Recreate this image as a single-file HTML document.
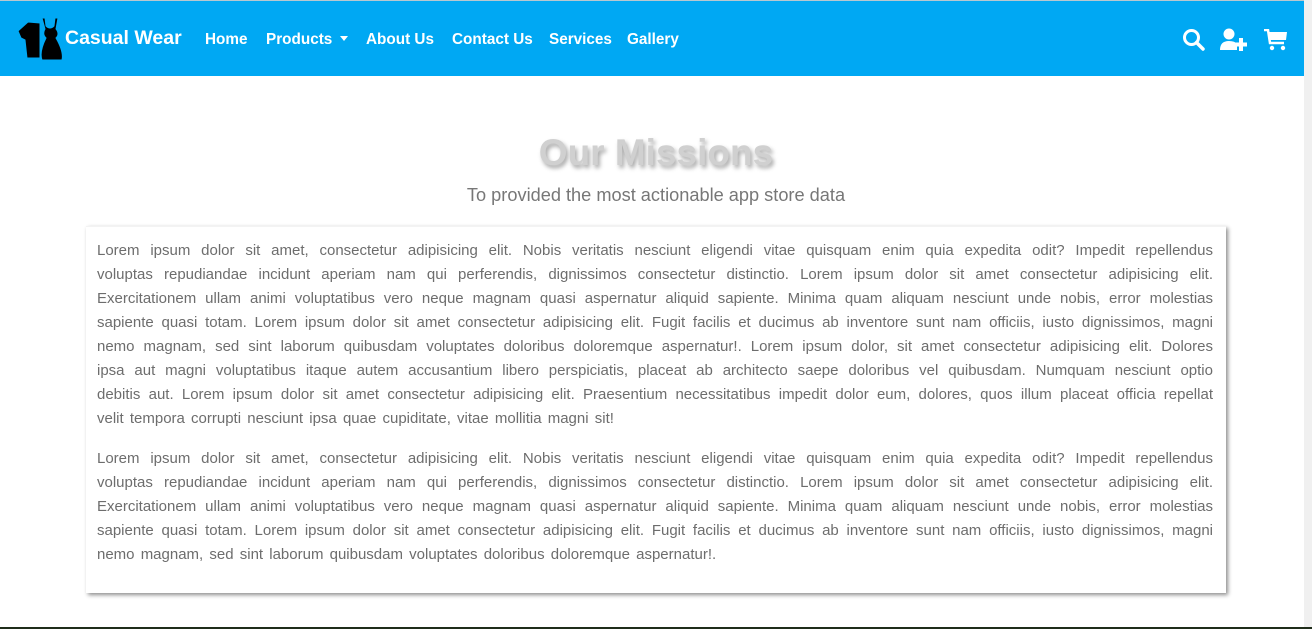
<!DOCTYPE html>
<html><head><meta charset="utf-8"><style>
*{margin:0;padding:0;box-sizing:border-box}
body{width:1312px;height:629px;overflow:hidden;background:#fff;font-family:"Liberation Sans",sans-serif;position:relative}
.nav{position:absolute;top:1px;left:0;width:1304px;height:75px;background:#00a8f3;color:#fff}
.topline{position:absolute;top:0;left:0;width:1312px;height:1px;background:#b8c8d0}
.scroll{position:absolute;top:0;right:0;width:8px;height:629px;background:#f0f0f0}
.bottom{position:absolute;bottom:0;left:0;width:1312px;height:2px;background:#1f2d1a}
.brand{position:absolute;left:65px;top:26px;font-weight:bold;font-size:19.5px}
.link{position:absolute;top:30px;font-weight:bold;font-size:15.3px}
h1{position:absolute;top:132px;left:0;width:1312px;text-align:center;font-size:37px;font-weight:bold;color:#d0d0d0;text-shadow:2px 3px 4px rgba(0,0,0,.35)}
.sub{position:absolute;top:185px;left:0;width:1312px;text-align:center;font-size:18.2px;color:#777}
.card{position:absolute;left:86px;top:226px;width:1140px;height:367px;box-shadow:2px 2px 4px rgba(0,0,0,.45);border-top:1px solid #f3f3f3;padding:12px 13px 0 11px;color:#6d6d6d;font-size:15px}
.l{height:24px;line-height:24px;text-align:justify;text-align-last:justify;white-space:nowrap;overflow:visible}
.l.e{text-align-last:left;word-spacing:2px}
.gap{height:16px}
</style></head><body>
<div class="topline"></div>
<div class="nav">
<svg style="position:absolute;left:16px;top:15px" width="48" height="46" viewBox="0 0 48 46">
<path d="M2 15 L12 6 L24 7 L24 42 L11 42 L9 24 L5 22 Z" fill="#000" stroke="#00a8f3" stroke-width="1"/>
<path d="M26 2 L29 2 L30 10 Q34 14 38 10 L39 2 L42 2 L40 13 Q44 18 40 22 Q48 36 46 44 L26 44 Q23 36 30 22 Q26 18 29 13 Z" fill="#000" stroke="#00a8f3" stroke-width="1"/>
</svg>
<div class="brand">Casual Wear</div>
<div class="link" style="left:205px">Home</div>
<div class="link" style="left:266px">Products <span style="display:inline-block;border-left:4px solid transparent;border-right:4px solid transparent;border-top:5px solid #fff;vertical-align:3px;margin-left:3px"></span></div>
<div class="link" style="left:366px">About Us</div>
<div class="link" style="left:452px">Contact Us</div>
<div class="link" style="left:549px">Services</div>
<div class="link" style="left:627px">Gallery</div>
<svg style="position:absolute;left:1182px;top:27px" width="24" height="24" viewBox="0 0 24 24"><circle cx="9.5" cy="9.5" r="7" fill="none" stroke="#fff" stroke-width="3"/><path d="M14.5 14.5 L21 21" stroke="#fff" stroke-width="3.5" stroke-linecap="round"/></svg>
<svg style="position:absolute;left:1220px;top:27px" width="30" height="24" viewBox="0 0 30 24"><circle cx="9" cy="6" r="5.5" fill="#fff"/><path d="M0 22 Q0 13 9 13 Q15 13 17 16 L17 22 Z" fill="#fff"/><rect x="19" y="10" width="4" height="13" fill="#fff"/><rect x="15" y="14.5" width="12" height="4" fill="#fff"/></svg>
<svg style="position:absolute;left:1264px;top:28px" width="24" height="22" viewBox="0 0 24 22"><path d="M0 1 L4 1 L6 14 L20 14" fill="none" stroke="#fff" stroke-width="2.5"/><path d="M5 3 L23 3 L22 11 L6 11 Z" fill="#fff"/><circle cx="8" cy="19" r="2.2" fill="#fff"/><circle cx="19" cy="19" r="2.2" fill="#fff"/></svg>
</div>
<h1>Our Missions</h1>
<div class="sub">To provided the most actionable app store data</div>
<div class="card">
<div class="l">Lorem ipsum dolor sit amet, consectetur adipisicing elit. Nobis veritatis nesciunt eligendi vitae quisquam enim quia expedita odit? Impedit repellendus</div>
<div class="l">voluptas repudiandae incidunt aperiam nam qui perferendis, dignissimos consectetur distinctio. Lorem ipsum dolor sit amet consectetur adipisicing elit.</div>
<div class="l">Exercitationem ullam animi voluptatibus vero neque magnam quasi aspernatur aliquid sapiente. Minima quam aliquam nesciunt unde nobis, error molestias</div>
<div class="l">sapiente quasi totam. Lorem ipsum dolor sit amet consectetur adipisicing elit. Fugit facilis et ducimus ab inventore sunt nam officiis, iusto dignissimos, magni</div>
<div class="l">nemo magnam, sed sint laborum quibusdam voluptates doloribus doloremque aspernatur!. Lorem ipsum dolor, sit amet consectetur adipisicing elit. Dolores</div>
<div class="l">ipsa aut magni voluptatibus itaque autem accusantium libero perspiciatis, placeat ab architecto saepe doloribus vel quibusdam. Numquam nesciunt optio</div>
<div class="l">debitis aut. Lorem ipsum dolor sit amet consectetur adipisicing elit. Praesentium necessitatibus impedit dolor eum, dolores, quos illum placeat officia repellat</div>
<div class="l e">velit tempora corrupti nesciunt ipsa quae cupiditate, vitae mollitia magni sit!</div>
<div class="gap"></div>
<div class="l">Lorem ipsum dolor sit amet, consectetur adipisicing elit. Nobis veritatis nesciunt eligendi vitae quisquam enim quia expedita odit? Impedit repellendus</div>
<div class="l">voluptas repudiandae incidunt aperiam nam qui perferendis, dignissimos consectetur distinctio. Lorem ipsum dolor sit amet consectetur adipisicing elit.</div>
<div class="l">Exercitationem ullam animi voluptatibus vero neque magnam quasi aspernatur aliquid sapiente. Minima quam aliquam nesciunt unde nobis, error molestias</div>
<div class="l">sapiente quasi totam. Lorem ipsum dolor sit amet consectetur adipisicing elit. Fugit facilis et ducimus ab inventore sunt nam officiis, iusto dignissimos, magni</div>
<div class="l e">nemo magnam, sed sint laborum quibusdam voluptates doloribus doloremque aspernatur!.</div>
</div>
<div class="scroll"></div>
<div class="bottom"></div>
</body></html>
